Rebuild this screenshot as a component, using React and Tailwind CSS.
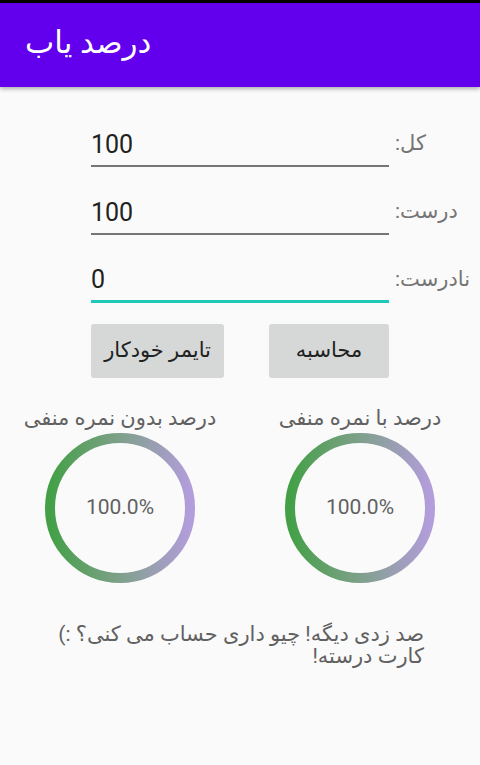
import React from "react";

const FONT = { fontFamily: 'Roboto, "DejaVu Sans", sans-serif' };

function Field({ label, value, focused }) {
  return (
    <div className="flex h-[68px] items-end pl-[91px]">
      <div
        className={`w-[298px] h-[50px] flex items-end pb-[8px] text-[25px] leading-none text-[#212121] ${
          focused ? "border-b-[3px] border-[#1fc8b8]" : "border-b-2 border-[#757575]"
        }`}
      >
        {value}
      </div>
      <div className="ml-[6px] pb-[13px] text-[21px] leading-none text-[#757575]" dir="rtl">
        {label}
      </div>
    </div>
  );
}

function Ring({ id, title, value }) {
  return (
    <div className="flex flex-col items-center w-[240px]">
      <div className="text-[21px] leading-none text-[#616161] h-[30px] flex items-center" dir="rtl">
        {title}
      </div>
      <div className="relative w-[150px] h-[150px]">
        <svg width="150" height="150" viewBox="0 0 150 150">
          <defs>
            <linearGradient id={id} x1="0" y1="0" x2="1" y2="0">
              <stop offset="0" stopColor="#43a047" />
              <stop offset="0.5" stopColor="#7fa08a" />
              <stop offset="1" stopColor="#b39ddb" />
            </linearGradient>
          </defs>
          <circle cx="75" cy="75" r="70" fill="none" stroke={`url(#${id})`} strokeWidth="10" />
        </svg>
        <div className="absolute inset-0 flex items-center justify-center text-[21px] text-[#616161]">
          {value}
        </div>
      </div>
    </div>
  );
}

export default function App() {
  return (
    <div className="w-[480px] h-[765px] bg-[#fafafa] overflow-hidden" style={FONT}>
      <div className="h-[3px] bg-black" />
      <div className="h-[84px] bg-[#6200ee] flex items-center pl-[25px] shadow-[0_2px_4px_rgba(0,0,0,0.3)] relative">
        <span className="text-white text-[31px] pb-[4px]" dir="rtl">درصد یاب</span>
      </div>

      <div className="pt-[12px]">
        <Field label="کل:" value="100" />
        <Field label="درست:" value="100" />
        <Field label="نادرست:" value="0" focused />
      </div>

      <div className="flex pl-[91px] mt-[21px] gap-[45px]">
        <button className="w-[133px] h-[54px] bg-[#d6d7d7] rounded-[3px] text-[21px] text-[#212121]" dir="rtl">
          تایمر خودکار
        </button>
        <button className="w-[120px] h-[54px] bg-[#d6d7d7] rounded-[3px] text-[21px] text-[#212121]" dir="rtl">
          محاسبه
        </button>
      </div>

      <div className="flex mt-[25px]">
        <Ring id="g1" title="درصد بدون نمره منفی" value="100.0%" />
        <Ring id="g2" title="درصد با نمره منفی" value="100.0%" />
      </div>

      <div className="mt-[40px] pr-[56px] text-right text-[21px] leading-[22px] text-[#616161]" dir="rtl">
        صد زدی دیگه! چیو داری حساب می کنی؟ :)
        <br />
        کارت درسته!
      </div>
    </div>
  );
}
